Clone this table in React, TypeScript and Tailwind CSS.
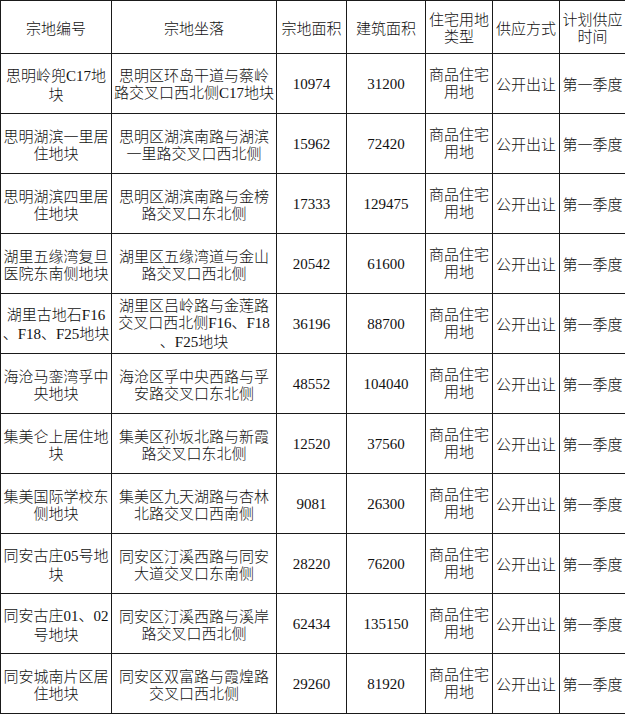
type Row = {
  code: string[]
  place: string[]
  area: string
  build: string
}

const rows: Row[] = [
  { code: ["思明岭兜C17地", "块"], place: ["思明区环岛干道与蔡岭", "路交叉口西北侧C17地块"], area: "10974", build: "31200" },
  { code: ["思明湖滨一里居", "住地块"], place: ["思明区湖滨南路与湖滨", "一里路交叉口西北侧"], area: "15962", build: "72420" },
  { code: ["思明湖滨四里居", "住地块"], place: ["思明区湖滨南路与金榜", "路交叉口东北侧"], area: "17333", build: "129475" },
  { code: ["湖里五缘湾复旦", "医院东南侧地块"], place: ["湖里区五缘湾道与金山", "路交叉口西北侧"], area: "20542", build: "61600" },
  { code: ["湖里古地石F16", "、F18、F25地块"], place: ["湖里区吕岭路与金莲路", "交叉口西北侧F16、F18", "、F25地块"], area: "36196", build: "88700" },
  { code: ["海沧马銮湾孚中", "央地块"], place: ["海沧区孚中央西路与孚", "安路交叉口东北侧"], area: "48552", build: "104040" },
  { code: ["集美仑上居住地", "块"], place: ["集美区孙坂北路与新霞", "路交叉口东北侧"], area: "12520", build: "37560" },
  { code: ["集美国际学校东", "侧地块"], place: ["集美区九天湖路与杏林", "北路交叉口西南侧"], area: "9081", build: "26300" },
  { code: ["同安古庄05号地", "块"], place: ["同安区汀溪西路与同安", "大道交叉口东南侧"], area: "28220", build: "76200" },
  { code: ["同安古庄01、02", "号地块"], place: ["同安区汀溪西路与溪岸", "路交叉口西北侧"], area: "62434", build: "135150" },
  { code: ["同安城南片区居", "住地块"], place: ["同安区双富路与霞煌路", "交叉口西北侧"], area: "29260", build: "81920" },
]

// latin letters/digits in the source use the narrow serif glyphs
function Mixed({ text }: { text: string }) {
  const parts = text.split(/([A-Za-z0-9]+)/)
  return (
    <>
      {parts.map((p, i) =>
        /^[A-Za-z0-9]+$/.test(p) ? (
          <span key={i} className="font-['Liberation_Serif',serif] font-normal">
            {p}
          </span>
        ) : (
          p
        )
      )}
    </>
  )
}

function Lines({ lines }: { lines: string[] }) {
  return (
    <>
      {lines.map((l, i) => (
        <div key={i} className="whitespace-nowrap">
          <Mixed text={l} />
        </div>
      ))}
    </>
  )
}

const cell = "border border-[#1a1a1a] p-0 text-center align-middle"

export default function App() {
  return (
    <div
      lang="zh-CN"
      className="bg-white text-[#111] text-[15px] leading-[17px] font-light font-['Noto_Sans_CJK_SC',sans-serif]"
    >
      <table className="table-fixed border-collapse w-[625px]">
        <colgroup>
          <col className="w-[111px]" />
          <col className="w-[165px]" />
          <col className="w-[70px]" />
          <col className="w-[79px]" />
          <col className="w-[67px]" />
          <col className="w-[67px]" />
          <col className="w-[66px]" />
        </colgroup>
        <thead>
          <tr className="h-[53px]">
            <th className={`${cell} font-light`}>宗地编号</th>
            <th className={`${cell} font-light`}>宗地坐落</th>
            <th className={`${cell} font-light`}>宗地面积</th>
            <th className={`${cell} font-light`}>建筑面积</th>
            <th className={`${cell} font-light`}>
              <Lines lines={["住宅用地", "类型"]} />
            </th>
            <th className={`${cell} font-light`}>供应方式</th>
            <th className={`${cell} font-light`}>
              <Lines lines={["计划供应", "时间"]} />
            </th>
          </tr>
        </thead>
        <tbody>
          {rows.map((r) => (
            <tr key={r.area} className="h-[60px]">
              <td className={cell}>
                <Lines lines={r.code} />
              </td>
              <td className={cell}>
                <Lines lines={r.place} />
              </td>
              <td className={cell}>
                <Mixed text={r.area} />
              </td>
              <td className={cell}>
                <Mixed text={r.build} />
              </td>
              <td className={cell}>
                <div className="-mt-1">
                  <Lines lines={["商品住宅", "用地"]} />
                </div>
              </td>
              <td className={cell}>公开出让</td>
              <td className={cell}>第一季度</td>
            </tr>
          ))}
        </tbody>
      </table>
    </div>
  )
}
